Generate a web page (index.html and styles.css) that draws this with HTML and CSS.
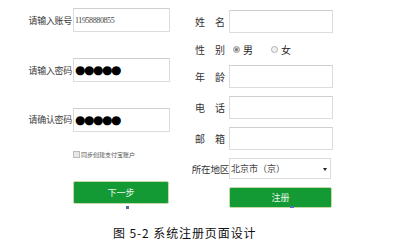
FILE: index.html
```html
<!DOCTYPE html>
<html lang="zh-CN">
<head>
  <meta charset="UTF-8" />
  <title>系统注册页面设计</title>
  <link rel="stylesheet" href="styles.css">
</head>
<body>

<div class="figure">
  <!-- 左侧：账号注册 -->
  <div class="account">
    <div class="row">
      <label class="label">请输入账号</label>
      <div class="input text">11958880855</div>
    </div>
    <div class="row">
      <label class="label">请输入密码</label>
      <div class="input dots">●●●●●</div>
    </div>
    <div class="row row-last">
      <label class="label">请确认密码</label>
      <div class="input dots">●●●●●</div>
    </div>
    <div class="check">
      <span class="box"></span>同步创建支付宝账户
    </div>
    <div class="btn next">下一步</div>
    <div class="mark"></div>
  </div>

  <!-- 右侧：个人信息 -->
  <div class="info">
    <div class="irow">
      <span class="ilabel">姓　名</span>
      <div class="field"></div>
    </div>
    <div class="irow gender">
      <span class="ilabel">性　别</span>
      <span class="radio on"></span><span class="opt">男</span>
      <span class="radio"></span><span class="opt">女</span>
    </div>
    <div class="irow">
      <span class="ilabel">年　龄</span>
      <div class="field"></div>
    </div>
    <div class="irow">
      <span class="ilabel">电　话</span>
      <div class="field"></div>
    </div>
    <div class="irow">
      <span class="ilabel">邮　箱</span>
      <div class="field"></div>
    </div>
    <div class="irow region">
      <span class="ilabel wide">所在地区</span>
      <div class="select">北京市（京）<span class="arrow"></span></div>
    </div>
    <div class="irow">
      <span class="ilabel"></span>
      <div class="btn reg">注册<span class="mark2"></span></div>
    </div>
  </div>
</div>

<p class="caption">图 5-2 系统注册页面设计</p>

</body>
</html>
```

FILE: styles.css
```css
html, body {
  margin: 0;
  padding: 0;
  background: #fff;
  font-family: "Noto Sans CJK SC", "Liberation Sans", sans-serif;
  color: #333;
}

.figure {
  display: flex;
  height: 218px;
}

.account {
  width: 190px;
  padding-top: 8px;
}

.row {
  display: flex;
  align-items: center;
  height: 24px;
  margin-bottom: 26px;
}

.row-last {
  margin-top: 2px;
  margin-bottom: 0;
  height: 23px;
}

.label {
  width: 72px;
  padding-right: 1px;
  text-align: right;
  font-size: 9px;
  letter-spacing: -0.3px;
  color: #3a3a3a;
}

.input {
  width: 94px;
  height: 22px;
  border: 1px solid #dcdcdc;
  border-top-color: #cfcfcf;
  display: flex;
  align-items: center;
  padding-left: 1px;
  box-sizing: content-box;
}

.text {
  font-family: "Liberation Serif", serif;
  font-size: 8px;
  letter-spacing: -0.4px;
  color: #444;
}

.dots {
  font-size: 12px;
  letter-spacing: -1.5px;
  color: #000;
  font-family: "DejaVu Sans", sans-serif;
}

.check {
  display: flex;
  align-items: center;
  margin: 20px 0 0 73px;
  font-size: 6px;
  color: #555;
  height: 7px;
}

.box {
  width: 5px;
  height: 5px;
  border: 1px solid #bbb;
  background: #e8e8e8;
  margin-right: 1px;
}

.btn {
  background: #139a35;
  border: 1px solid #c5d9a8;
  border-radius: 2px;
  color: #e9f5ea;
  font-size: 9px;
  display: flex;
  align-items: center;
  justify-content: center;
  position: relative;
}

.next {
  width: 94px;
  height: 21px;
  margin: 23px 0 0 73px;
}

.mark {
  width: 3px;
  height: 3px;
  background: #4e6f9e;
  margin: 2px 0 0 126px;
}

.info {
  padding-top: 10px;
}

.irow {
  display: flex;
  align-items: center;
  margin-bottom: 8px;
}

.ilabel {
  width: 35px;
  padding-right: 4px;
  text-align: right;
  font-size: 10px;
  color: #333;
  white-space: nowrap;
}

.ilabel.wide {
  padding-right: 0;
  width: 39px;
  font-size: 9.5px;
  letter-spacing: -0.2px;
}

.field {
  width: 102px;
  height: 21px;
  border: 1px solid #dcdcdc;
  border-top-color: #cfcfcf;
}

.gender {
  height: 16px;
}

.radio {
  width: 5px;
  height: 5px;
  border-radius: 50%;
  border: 1px solid #b0b0b0;
  background: #f2f2f2;
  margin: 0 3px 0 4px;
}

.radio.on {
  background: #777;
  box-shadow: inset 0 0 0 1px #ddd;
}

.opt {
  font-size: 10px;
  color: #222;
  margin-right: 14px;
}

.region {
  margin-top: 2px;
}

.select {
  width: 99px;
  height: 19px;
  border: 1px solid #dcdcdc;
  font-size: 9px;
  color: #444;
  display: flex;
  align-items: center;
  padding-left: 1px;
  position: relative;
}

.arrow {
  position: absolute;
  right: 3px;
  top: 9px;
  border-left: 2px solid transparent;
  border-right: 2px solid transparent;
  border-top: 3px solid #222;
}

.reg {
  width: 101px;
  height: 19px;
  margin-top: 0;
}

.mark2 {
  position: absolute;
  left: 60px;
  bottom: -1px;
  width: 4px;
  height: 2px;
  background: #5a6fb0;
}

.caption {
  margin: 6px 0 0 113px;
  font-size: 12px;
  color: #111;
  letter-spacing: 0.9px;
}
```
